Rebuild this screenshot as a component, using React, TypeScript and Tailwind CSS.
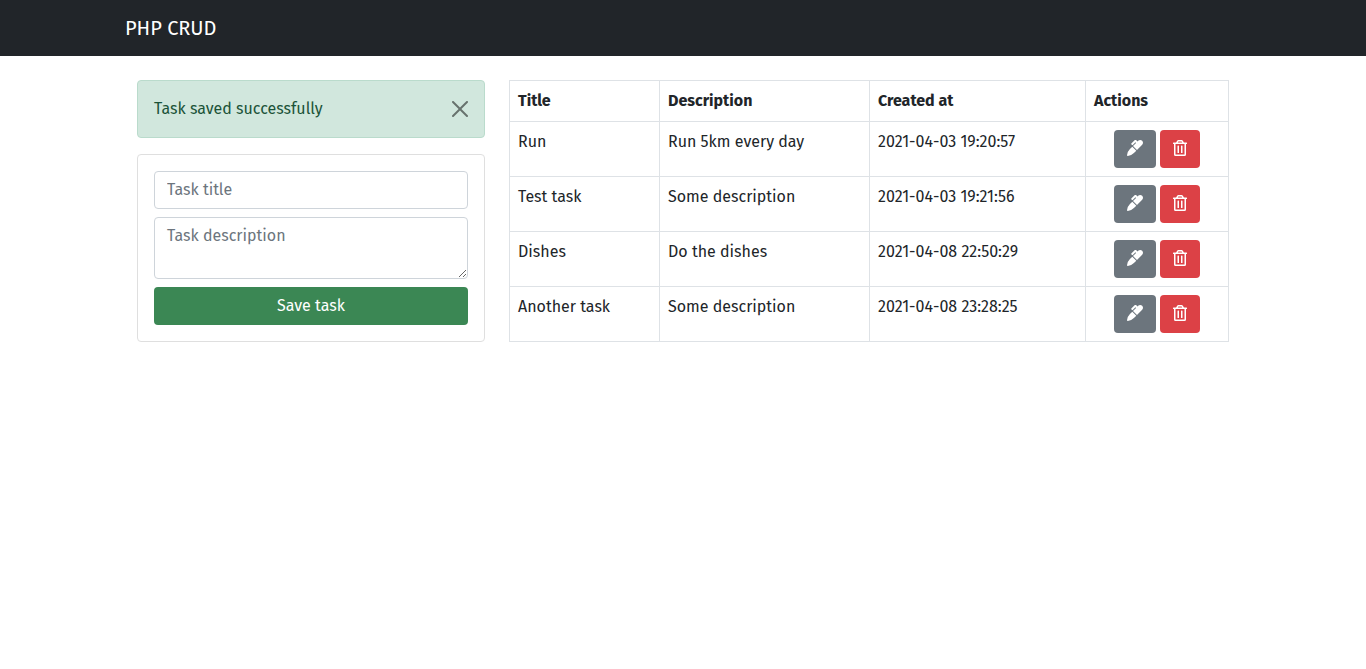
import { FaMarker, FaRegTrashAlt } from "react-icons/fa";

type Task = { title: string; description: string; created: string };

const tasks: Task[] = [
  { title: "Run", description: "Run 5km every day", created: "2021-04-03 19:20:57" },
  { title: "Test task", description: "Some description", created: "2021-04-03 19:21:56" },
  { title: "Dishes", description: "Do the dishes", created: "2021-04-08 22:50:29" },
  { title: "Another task", description: "Some description", created: "2021-04-08 23:28:25" },
];

export default function App() {
  return (
    <div className="min-h-[669px] bg-white font-['Fira_Sans','Noto_Sans',sans-serif] text-base text-[#212529]">
      <nav className="h-14 bg-[#212529]">
        <div className="mx-auto flex h-14 w-[1116px] items-center">
          <a href="#" className="text-xl leading-[30px] text-white">PHP CRUD</a>
        </div>
      </nav>
      <main className="mx-auto flex w-[1092px] items-start gap-6 pt-6">
        <section className="w-[348px] shrink-0">
          <div className="mb-4 flex h-[58px] items-center justify-between rounded border border-[#badbcc] bg-[#d1e7dd] px-4 text-[#1b5338]">
            <span>Task saved successfully</span>
            <button aria-label="Close" className="opacity-50">
              <svg viewBox="0 0 16 16" className="h-4 w-4 fill-black"><path d="M.293.293a1 1 0 011.414 0L8 6.586 14.293.293a1 1 0 111.414 1.414L9.414 8l6.293 6.293a1 1 0 01-1.414 1.414L8 9.414l-6.293 6.293a1 1 0 01-1.414-1.414L6.586 8 .293 1.707a1 1 0 010-1.414z" /></svg>
            </button>
          </div>
          <form className="flex h-[188px] flex-col gap-2 rounded border border-[#dfdfdf] p-4">
            <input placeholder="Task title" className="h-[38px] rounded border border-[#ced4da] px-3 pb-0.5 placeholder:text-[#6c757d]" />
            <textarea placeholder="Task description" className="h-[62px] resize-y rounded border border-[#ced4da] px-3 py-1.5 placeholder:text-[#6c757d]" />
            <button type="button" className="h-[38px] rounded bg-[#3b8754] text-white">Save task</button>
          </form>
        </section>
        <table className="w-[720px] shrink-0 table-fixed border-collapse text-left">
          <colgroup>
            <col className="w-[150px]" /><col className="w-[210px]" /><col className="w-[216px]" /><col className="w-[143px]" />
          </colgroup>
          <thead>
            <tr className="h-[41px]">
              {["Title", "Description", "Created at", "Actions"].map((h) => (
                <th key={h} className="border border-[#dee2e6] p-2 font-bold">{h}</th>
              ))}
            </tr>
          </thead>
          <tbody>
            {tasks.map((t) => (
              <tr key={t.created} className="h-[55px]">
                {[t.title, t.description, t.created].map((text) => (
                  <td key={text} className="border border-[#dee2e6] p-2 align-top whitespace-nowrap">{text}</td>
                ))}
                <td className="border border-[#dee2e6] p-2 align-top">
                  <div className="flex justify-center gap-1">
                    <button aria-label="Edit" className="flex h-[38px] w-[42px] items-center justify-center rounded bg-[#6c757d] pb-0.5 text-white"><FaMarker /></button>
                    <button aria-label="Delete" className="flex h-[38px] w-10 items-center justify-center rounded bg-[#dc4146] pb-0.5 text-white"><FaRegTrashAlt /></button>
                  </div>
                </td>
              </tr>
            ))}
          </tbody>
        </table>
      </main>
    </div>
  );
}
